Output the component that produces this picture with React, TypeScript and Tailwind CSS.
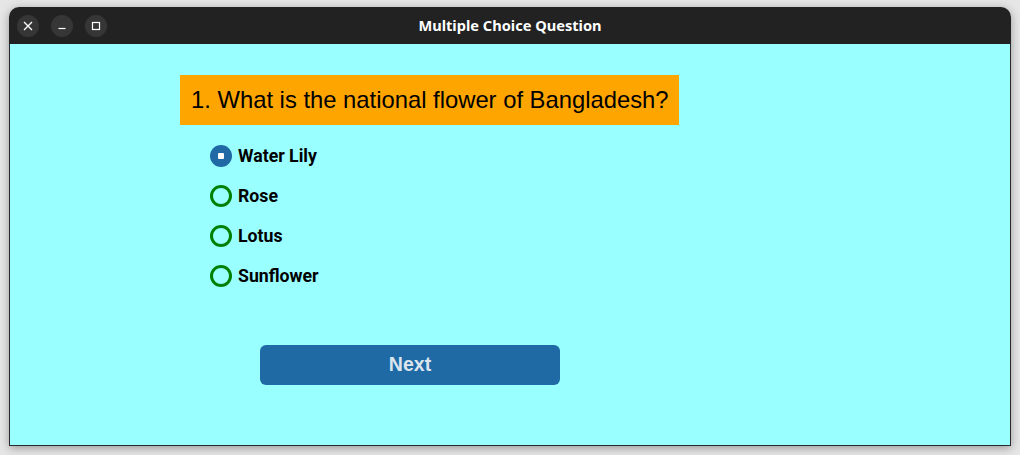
import React from "react";

const options = ["Water Lily", "Rose", "Lotus", "Sunflower"];

export default function App() {
  return (
    <div className="w-[1020px] h-[455px] bg-[#e6e6e6] pt-[7px] pl-[9px] overflow-hidden">
      <div className="w-[1002px] shadow-[0_2px_10px_rgba(0,0,0,0.35)] rounded-t-[10px]">
        <div className="h-[37px] bg-[#222222] rounded-t-[10px] flex items-center relative px-[8px]">
          <div className="flex gap-[12px] items-center">
            <div className="w-[22px] h-[22px] rounded-full bg-[#363636] flex items-center justify-center">
              <svg width="10" height="10" viewBox="0 0 10 10">
                <path d="M1 1 L9 9 M9 1 L1 9" stroke="#ffffff" strokeWidth="1.3" />
              </svg>
            </div>
            <div className="w-[22px] h-[22px] rounded-full bg-[#363636] flex items-center justify-center">
              <svg width="10" height="10" viewBox="0 0 10 10">
                <path d="M1.5 7.5 L8.5 7.5" stroke="#ffffff" strokeWidth="1.2" />
              </svg>
            </div>
            <div className="w-[22px] h-[22px] rounded-full bg-[#363636] flex items-center justify-center">
              <svg width="10" height="10" viewBox="0 0 10 10">
                <rect x="1.5" y="1.5" width="7" height="7" fill="none" stroke="#ffffff" strokeWidth="1.2" />
              </svg>
            </div>
          </div>
          <div className="absolute inset-0 flex items-center justify-center pointer-events-none">
            <span className="text-white font-bold text-[14.6px] font-['Noto_Sans',sans-serif]">
              Multiple Choice Question
            </span>
          </div>
        </div>
        <div className="h-[402px] bg-[#99ffff] border border-t-0 border-[#2b2b2b] pt-[31px] pl-[170px]">
          <div className="w-[499px] h-[50px] bg-[#ffa500] flex items-center pl-[11px]">
            <span className="text-black text-[23.8px] font-['Liberation_Sans',Arial,sans-serif]">
              1. What is the national flower of Bangladesh?
            </span>
          </div>
          <div className="ml-[30px] mt-[19px] flex flex-col gap-[16px]">
            {options.map((o, i) => (
              <div key={o} className="h-[24px] flex items-center gap-[6px]">
                {i === 0 ? (
                  <div className="w-[22px] h-[22px] rounded-full bg-[#1f6aa5] flex items-center justify-center">
                    <div className="w-[6px] h-[6px] rounded-[1px] bg-white" />
                  </div>
                ) : (
                  <div className="w-[22px] h-[22px] rounded-full border-[3px] border-[#008000]" />
                )}
                <span className="text-black font-bold text-[17.7px] font-['Roboto',sans-serif]">{o}</span>
              </div>
            ))}
          </div>
          <div className="ml-[80px] mt-[57px] w-[300px] h-[40px] rounded-[6px] bg-[#1f6aa5] flex items-center justify-center">
            <span className="text-[#dce4ee] font-bold text-[19.5px] font-['Liberation_Sans',Arial,sans-serif]">Next</span>
          </div>
        </div>
      </div>
    </div>
  );
}
